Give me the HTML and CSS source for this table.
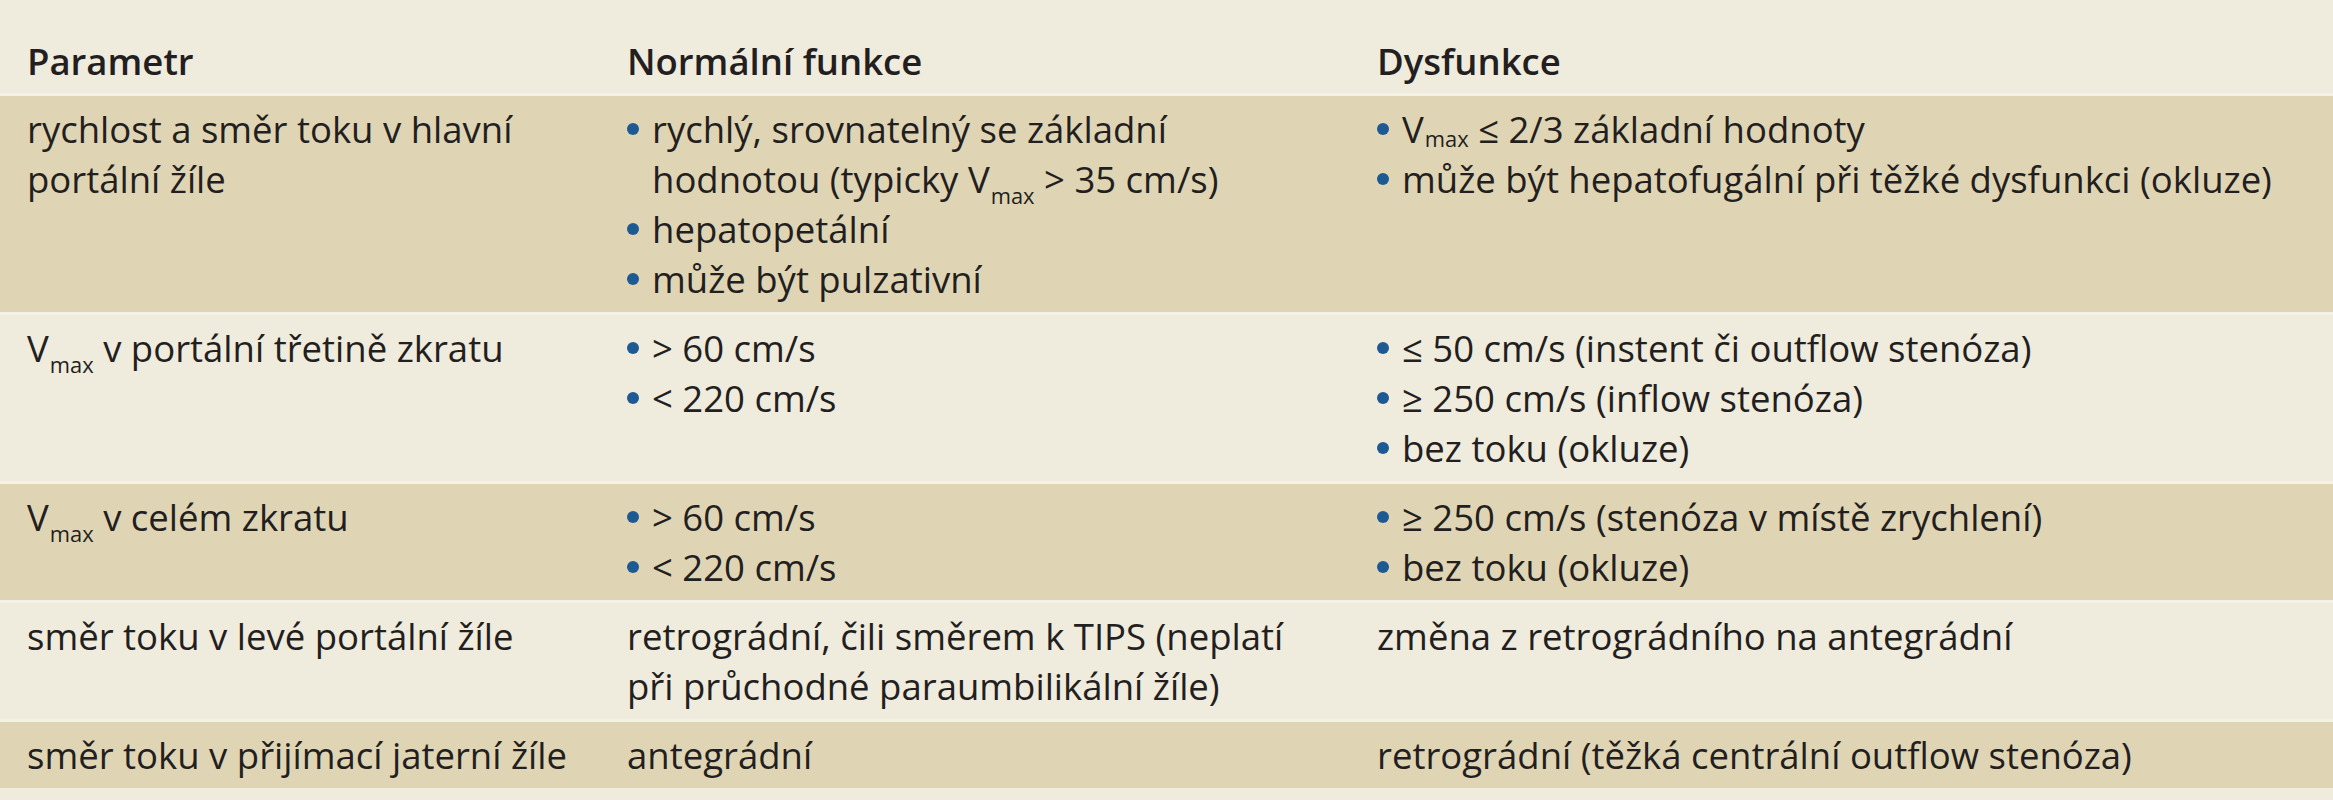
FILE: index.html
```html
<!DOCTYPE html>
<html lang="cs">
<head>
<meta charset="utf-8">
<title>TIPS – parametry</title>
<link rel="stylesheet" href="styles.css">
</head>
<body>
<div class="table">
  <div class="row head">
    <div class="cell c1">Parametr</div>
    <div class="cell c2">Normální funkce</div>
    <div class="cell c3">Dysfunkce</div>
  </div>
  <div class="row dark">
    <div class="cell c1">rychlost a směr toku v hlavní<br>portální žíle</div>
    <div class="cell c2">
      <div class="li"><span>rychlý, srovnatelný se základní<br>hodnotou (typicky V<sub>max</sub> &gt; 35 cm/s)</span></div>
      <div class="li"><span>hepatopetální</span></div>
      <div class="li"><span>může být pulzativní</span></div>
    </div>
    <div class="cell c3">
      <div class="li"><span>V<sub class="tight">max</sub> ≤ 2/3 základní hodnoty</span></div>
      <div class="li"><span>může být hepatofugální při těžké dysfunkci (okluze)</span></div>
    </div>
  </div>
  <div class="row light">
    <div class="cell c1">V<sub>max</sub> v portální třetině zkratu</div>
    <div class="cell c2">
      <div class="li"><span>&gt; 60 cm/s</span></div>
      <div class="li"><span>&lt; 220 cm/s</span></div>
    </div>
    <div class="cell c3">
      <div class="li"><span>≤ 50 cm/s (instent či outflow stenóza)</span></div>
      <div class="li"><span>≥ 250 cm/s (inflow stenóza)</span></div>
      <div class="li"><span>bez toku (okluze)</span></div>
    </div>
  </div>
  <div class="row dark">
    <div class="cell c1">V<sub>max</sub> v celém zkratu</div>
    <div class="cell c2">
      <div class="li"><span>&gt; 60 cm/s</span></div>
      <div class="li"><span>&lt; 220 cm/s</span></div>
    </div>
    <div class="cell c3">
      <div class="li"><span>≥ 250 cm/s (stenóza v místě zrychlení)</span></div>
      <div class="li"><span>bez toku (okluze)</span></div>
    </div>
  </div>
  <div class="row light">
    <div class="cell c1">směr toku v levé portální žíle</div>
    <div class="cell c2">retrográdní, čili směrem k TIPS (neplatí<br>při průchodné paraumbilikální žíle)</div>
    <div class="cell c3">změna z retrográdního na antegrádní</div>
  </div>
  <div class="row dark">
    <div class="cell c1">směr toku v přijímací jaterní žíle</div>
    <div class="cell c2">antegrádní</div>
    <div class="cell c3">retrográdní (těžká centrální outflow stenóza)</div>
  </div>
</div>
</body>
</html>
```

FILE: styles.css
```css
html, body {
  margin: 0;
  padding: 0;
  background: #efebdd;
}
body {
  font-family: "Open Sans", "Noto Sans", sans-serif;
  font-size: 36.5px;
  line-height: 50px;
  color: #231f20;
}
.table {
  width: 2333px;
}
.row {
  display: grid;
  grid-template-columns: 627px 750px 1fr;
  padding: 8px 0 8px;
  border-top: 3px solid #f4f1e7;
}
.row.head {
  border-top: 0;
  padding: 36px 0 7px;
  font-weight: 600;
}
.row.light {
  background: #efebdd;
}
.row.dark {
  background: #dfd5b5;
}
.c1 {
  padding-left: 27px;
}
.li {
  display: flex;
  align-items: flex-start;
}
.li::before {
  content: "";
  flex: 0 0 auto;
  width: 12px;
  height: 12px;
  border-radius: 50%;
  background: #1d5a94;
  margin: 19px 13px 0 0;
}
sub {
  font-size: 0.6em;
  line-height: 0;
  vertical-align: -11px;
  margin-left: 1px;
}
sub.tight {
  vertical-align: -4px;
}
```
